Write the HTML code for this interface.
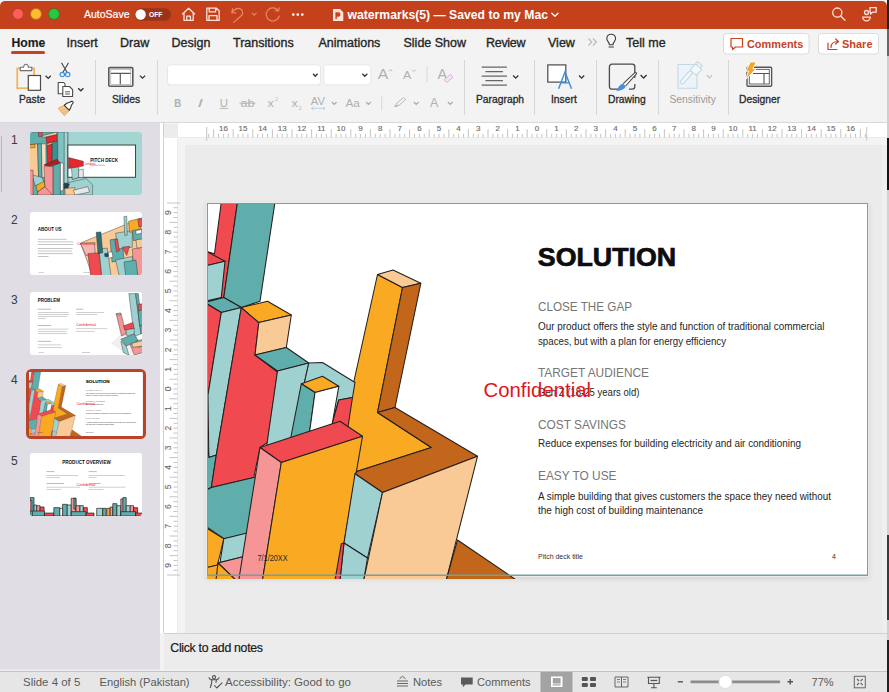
<!DOCTYPE html>
<html><head><meta charset="utf-8">
<style>
*{margin:0;padding:0;box-sizing:border-box}
html,body{width:889px;height:692px;overflow:hidden;background:#f2f2f2;font-family:"Liberation Sans",sans-serif}
.a{position:absolute}
#titlebar{left:0;top:1px;width:887px;height:28px;background:#c5411c;border-radius:5px 5px 0 0}
.tl{position:absolute;top:8.4px;width:12px;height:12px;border-radius:50%;border:0.8px solid rgba(120,20,10,0.45)}
.tab{position:absolute;top:35.5px;font-size:12.5px;color:#262626;white-space:nowrap;-webkit-text-stroke:0.35px #262626}
.lbl{position:absolute;top:94.2px;font-size:10.3px;color:#2a2a2a;white-space:nowrap;-webkit-text-stroke:0.3px #2a2a2a}
.sep{position:absolute;top:60px;width:1px;height:55px;background:#d6d6d6}
.num{position:absolute;left:11px;font-size:12px;color:#3a3a3a}
.thumb{position:absolute;left:29px;width:113px;height:63px;border-radius:3px;overflow:hidden;background:#fff}
.st{position:absolute;top:676px;font-size:11.5px;color:#555;white-space:nowrap}
</style></head><body>
<div class="a" style="left:0;top:0;width:889px;height:692px;background:#f3f3f3"></div>
<!-- right dark edge -->
<div class="a" style="left:887px;top:0;width:2px;height:692px;background:linear-gradient(#222 0,#222 29px,#666 29px,#666 56px,#cfcfcf 56px,#cfcfcf 138px,#141414 138px,#141414 190px,#d2d2d2 190px,#d2d2d2 535px,#3a3a3a 535px,#3a3a3a 620px,#cfcfcf 620px,#cfcfcf 640px,#222 640px)"></div>
<!-- title bar -->
<div id="titlebar" class="a"></div>
<div class="tl" style="left:12px;background:#fc5f57"></div>
<div class="tl" style="left:30px;background:#fdbc2e"></div>
<div class="tl" style="left:48px;background:#28c840"></div>
<div class="a" style="left:84px;top:8px;font-size:10.5px;color:#fff;-webkit-text-stroke:0.2px #fff">AutoSave</div>

<!-- ribbon background -->
<div class="a" style="left:0;top:29px;width:887px;height:94px;background:#f3f3f3;border-bottom:1px solid #d9d9d9"></div>

<!-- tabs -->
<div class="tab" style="left:11.5px;font-weight:bold;font-size:12.2px;-webkit-text-stroke:0.1px #1a1a1a;color:#1a1a1a">Home</div>
<div class="a" style="left:11px;top:51px;width:34px;height:3px;border-radius:2px;background:#c8421f"></div>
<div class="tab" style="left:66.5px">Insert</div>
<div class="tab" style="left:120px">Draw</div>
<div class="tab" style="left:171.5px">Design</div>
<div class="tab" style="left:233px">Transitions</div>
<div class="tab" style="left:318.5px">Animations</div>
<div class="tab" style="left:403.5px">Slide Show</div>
<div class="tab" style="left:486px;letter-spacing:-0.3px">Review</div>
<div class="tab" style="left:548px">View</div>
<div class="tab" style="left:626px">Tell me</div>

<!-- labels -->
<div class="lbl" style="left:19px">Paste</div>
<div class="lbl" style="left:112px">Slides</div>
<div class="lbl" style="left:476px">Paragraph</div>
<div class="lbl" style="left:551px">Insert</div>
<div class="lbl" style="left:608px">Drawing</div>
<div class="lbl" style="left:669.5px;color:#9a9a9a;-webkit-text-stroke:0">Sensitivity</div>
<div class="lbl" style="left:739px">Designer</div>

<!-- separators -->
<div class="sep" style="left:95px"></div>
<div class="sep" style="left:157px"></div>
<div class="sep" style="left:464px"></div>
<div class="sep" style="left:534px"></div>
<div class="sep" style="left:596px"></div>
<div class="sep" style="left:658px"></div>
<div class="sep" style="left:728px"></div>

<!-- ribbon icons -->
<svg class="a" style="left:0;top:0" width="889" height="123" viewBox="0 0 889 123">
<!-- title bar icons -->
<rect x="134.5" y="8.3" width="36.5" height="12.5" rx="6.25" fill="#8a3019" fill-opacity="0.75"/>
<circle cx="140.6" cy="14.55" r="5.2" fill="#fff"/>
<text x="149" y="17.3" font-family="Liberation Sans" font-weight="bold" font-size="7.2" fill="#fff" textLength="13.5" lengthAdjust="spacingAndGlyphs">OFF</text>
<g fill="none" stroke="#fde3d9" stroke-width="1.3" stroke-linejoin="round" stroke-linecap="round">
 <path d="M182.6 14 L188.6 8.2 L194.6 14 M184 12.8 V20.3 H193.2 V12.8 M186.8 20.3 V16.2 H190.4 V20.3"/>
 <path d="M206.8 8.2 H216.4 L219.2 11 V20.3 H206.8 Z M209.2 8.2 V11.8 H215.6 V8.2 M209 20.3 V15.6 H217 V20.3"/>
</g>
<g fill="none" stroke="#e8866b" stroke-width="1.2" stroke-linecap="round" stroke-linejoin="round">
 <path d="M231.8 12.6 L232.6 8.6 M231.8 12.6 L235.8 12.9 M232.2 12.2 C234.5 9.3 237.2 8 239.8 8.6 C243 9.5 243.2 13.2 241.8 15.3 L233.6 22.4"/>
 <path d="M252.2 13.2 L254.2 15.2 L256.2 13.2"/>
 <path d="M278.2 10.6 A6.6 6.6 0 1 0 279.2 16 M279.2 7.8 L278.6 11 L275.4 10.7"/>
</g>
<circle cx="293.3" cy="14.6" r="1.3" fill="#fff"/><circle cx="297.8" cy="14.6" r="1.3" fill="#fff"/><circle cx="302.3" cy="14.6" r="1.3" fill="#fff"/>
<!-- ppt doc icon -->
<path d="M333 9 H340 L343.3 12.3 V21 H333 Z" fill="#fde3d9"/>
<path d="M335.4 12.3 H338.3 A2.2 2.2 0 0 1 338.3 16.7 H336.8 V19 H335.4 Z" fill="#c8421f"/>
<text x="347.5" y="18.6" font-family="Liberation Sans" font-weight="bold" font-size="12.3" fill="#fff" textLength="200.5" lengthAdjust="spacingAndGlyphs">watermarks(5) — Saved to my Mac</text>
<path d="M551.8 13.2 L554.9 16.2 L558 13.2" fill="none" stroke="#fff" stroke-width="1.3" stroke-linecap="round" stroke-linejoin="round"/>
<g fill="none" stroke="#fde3d9" stroke-width="1.3" stroke-linecap="round">
 <circle cx="837.3" cy="12.6" r="4.6"/><path d="M840.6 16 L845 20.3"/>
 <circle cx="866.5" cy="12.5" r="2"/>
 <path d="M862.8 17.2 H870.2 A3.7 3.7 0 0 1 862.8 17.2 Z"/>
 <path d="M870 7.6 H876.2 V12.2 H872.6 L870.6 14 V12.2 H870 Z" stroke-linejoin="round"/>
</g>
<!-- Tabs extras: >> and lightbulb -->
<path d="M588.5 38.5 L591.8 42 L588.5 45.5 M593 38.5 L596.3 42 L593 45.5" fill="none" stroke="#b8b8b8" stroke-width="1.1"/>
<g fill="none" stroke="#3a3a3a" stroke-width="1.1" stroke-linecap="round">
 <path d="M609 47 H613.4 M609.4 44.8 C609.4 42 606.8 41.2 606.8 38.6 A4.4 4.4 0 0 1 615.6 38.6 C615.6 41.2 613 42 613 44.8 Z"/>
</g>
<!-- Comments / Share buttons -->
<rect x="723.5" y="33.5" width="85.5" height="20.5" rx="3" fill="#fff" stroke="#dcdcdc"/>
<rect x="818.5" y="33.5" width="60" height="20.5" rx="3" fill="#fff" stroke="#dcdcdc"/>
<g fill="none" stroke="#c8421f" stroke-width="1.2" stroke-linejoin="round" stroke-linecap="round">
 <path d="M731 38.5 H742.5 V47 H735.5 L732.6 49.6 V47 H731 Z"/>
 <path d="M828 43 V49.5 H837 M831 47.5 C831 43.5 834 41.5 838 41.5 M835.6 39 L838.5 41.5 L835.6 44"/>
</g>
<text x="747" y="47.8" font-family="Liberation Sans" font-weight="bold" font-size="11.8" fill="#c8421f" textLength="56.3" lengthAdjust="spacingAndGlyphs">Comments</text>
<text x="842" y="47.8" font-family="Liberation Sans" font-weight="bold" font-size="11.8" fill="#c8421f" textLength="30.5" lengthAdjust="spacingAndGlyphs">Share</text>

<!-- Paste -->
<rect x="17.2" y="68.4" width="17" height="19.8" fill="none" stroke="#f2b464" stroke-width="1.8"/>
<path d="M20.2 70.6 V67.2 H23.6 C23.8 64.8 25 64.2 26 64.2 C27 64.2 28.2 64.8 28.4 67.2 H31.8 V70.6 Z" fill="#fff" stroke="#6e6e6e" stroke-width="1.1" stroke-linejoin="round"/>
<rect x="28.3" y="75.5" width="12.2" height="14.8" fill="#fff" stroke="#4a4a4a" stroke-width="1.2"/>
<path d="M45.6 75.8 L48.2 78.4 L50.8 75.8" fill="none" stroke="#333" stroke-width="1.3"/>
<!-- scissors -->
<g fill="none" stroke-width="1.1">
 <path d="M61.5 62.8 L67 72.3 M68.5 62.8 L63 72.3" stroke="#444"/>
 <circle cx="62.3" cy="74.6" r="2.2" stroke="#3d8ad6"/><circle cx="67.7" cy="74.6" r="2.2" stroke="#3d8ad6"/>
</g>
<!-- copy -->
<g fill="#fff" stroke="#4a4a4a" stroke-width="1.1" stroke-linejoin="round">
 <path d="M58.2 82.5 H63.8 L65 84 V93.8 H58.2 Z"/>
 <path d="M62.8 86.5 H69.5 L72.6 89.6 V96.5 H62.8 Z"/>
 <path d="M65 91.8 H70 M65 94 H70" stroke-width="0.9"/>
</g>
<path d="M78.2 88.2 L80.8 90.8 L83.4 88.2" fill="none" stroke="#333" stroke-width="1.3"/>
<!-- format painter -->
<path d="M58.3 108.3 L64.3 105.3 L69.3 110.3 L64.4 115.6 Z" fill="#f8c890" stroke="#eda456" stroke-width="1" stroke-linejoin="round"/>
<path d="M61 110.6 L66.6 108.6 M62.5 113 L67.8 110.8" stroke="#f0a860" stroke-width="0.8"/>
<path d="M64.3 105.3 L67.2 103 L69.2 102.5 L71.6 101.2 A1.3 1.3 0 0 1 73 103 L71.4 105.2 L70.8 107.4 L69.3 110.3 Z" fill="#fff" stroke="#333" stroke-width="1.1" stroke-linejoin="round"/>
<!-- Slides -->
<rect x="108.8" y="67.6" width="24" height="18.6" rx="1" fill="#fff" stroke="#5a5a5a" stroke-width="1.6"/>
<path d="M110.8 73.4 H130.8 M120.3 73.4 V84.5" stroke="#5a5a5a" stroke-width="1.2"/>
<rect x="110.8" y="69.6" width="20" height="14.8" fill="none" stroke="#9a9a9a" stroke-width="0.6"/>
<path d="M139.9 75.6 L142.5 78.2 L145.1 75.6" fill="none" stroke="#333" stroke-width="1.3"/>
<!-- font boxes -->
<rect x="167.5" y="64.8" width="153" height="20" rx="3" fill="#fff" stroke="#e2e2e2" stroke-width="0.8"/>
<rect x="323.8" y="64.8" width="47" height="20" rx="3" fill="#fff" stroke="#e2e2e2" stroke-width="0.8"/>
<path d="M313 73.8 L315.3 76.3 L317.6 73.8 M362.3 73.8 L364.8 76.3 L367.3 73.8" fill="none" stroke="#333" stroke-width="1.3"/>
<g font-family="Liberation Sans" fill="#b0b0b0">
 <text x="377.8" y="79.4" font-size="14.5" textLength="10.5" lengthAdjust="spacingAndGlyphs">A</text>
 <text x="403" y="79.4" font-size="11.5" textLength="8.2" lengthAdjust="spacingAndGlyphs">A</text>
 <text x="437.6" y="79.4" font-size="14.5" textLength="9.5" lengthAdjust="spacingAndGlyphs">A</text>
 <text x="174.3" y="107" font-size="11.5" font-weight="bold" textLength="7" lengthAdjust="spacingAndGlyphs">B</text>
 <text x="197.5" y="107" font-size="11.5" font-style="italic" textLength="5.5" lengthAdjust="spacingAndGlyphs">I</text>
 <text x="219.8" y="107" font-size="11.5" textLength="8.2" lengthAdjust="spacingAndGlyphs">U</text>
 <text x="240.5" y="107" font-size="11" textLength="14" lengthAdjust="spacingAndGlyphs">ab</text>
 <text x="267.5" y="107" font-size="11.5" textLength="6.3" lengthAdjust="spacingAndGlyphs">x</text>
 <text x="291.5" y="107" font-size="11.5" textLength="6.3" lengthAdjust="spacingAndGlyphs">x</text>
 <text x="310.8" y="105" font-size="11" textLength="14.2" lengthAdjust="spacingAndGlyphs">AV</text>
 <text x="345.5" y="107" font-size="11.5" textLength="14.3" lengthAdjust="spacingAndGlyphs">Aa</text>
 <text x="430" y="107" font-size="12.5" textLength="8.3" lengthAdjust="spacingAndGlyphs">A</text>
</g>
<g fill="none" stroke="#b0b0b0" stroke-width="0.9">
 <path d="M389 71.3 L390.6 69.6 L392.2 71.3 M412.3 69.8 L414 71.5 L415.7 69.8"/>
 <path d="M427 66.4 V82.1 M381.7 96 V110.9" stroke="#d6d6d6"/>
 <path d="M219.8 108.4 H228.2 M239.5 103.2 H255.5"/>
 <path d="M331.8 102 L334.2 104.4 L336.6 102 M366 102 L368.4 104.4 L370.8 102 M413.8 102 L416.2 104.4 L418.6 102 M447.8 102 L450.2 104.4 L452.6 102" stroke="#a8a8a8" stroke-width="1.1"/>
 <path d="M395 106 L397 103 L403.5 97.5 L405.6 99.6 L399.2 105.2 Z M394.3 106.5 H397.5"/>
</g>
<text x="274.8" y="101" font-family="Liberation Sans" font-size="6" fill="#a9c7e3">2</text>
<text x="298.5" y="109.5" font-family="Liberation Sans" font-size="6" fill="#a9c7e3">2</text>
<path d="M311.5 108.3 H325 M311.5 108.3 L313.3 106.8 M311.5 108.3 L313.3 109.8 M325 108.3 L323.2 106.8 M325 108.3 L323.2 109.8" fill="none" stroke="#a9c7e3" stroke-width="0.8"/>
<path d="M444.2 79.6 L450.6 74.4 L453 77.3 L446.6 82.5 Z" fill="#f6e4f6" stroke="#d9a8dc" stroke-width="0.9"/>
<!-- Paragraph -->
<g stroke="#666" stroke-width="1.3">
 <path d="M481.7 67.1 H506.9 M485.4 71.6 H502.9 M481.7 76.2 H506.9 M485.4 80.7 H502.9 M481.7 85.1 H506.9"/>
</g>
<path d="M513.1 75.5 L515.7 78.1 L518.3 75.5" fill="none" stroke="#333" stroke-width="1.3"/>
<!-- Insert -->
<rect x="547.8" y="64.9" width="18" height="17.2" fill="#fff" stroke="#4a4a4a" stroke-width="1.2"/>
<path d="M558.6 88.7 L565 71.9 L571.5 88.7 M561 82.9 H569" fill="none" stroke="#3a8ed8" stroke-width="1.4"/>
<path d="M579 75.5 L581.6 78.1 L584.2 75.5" fill="none" stroke="#333" stroke-width="1.3"/>
<!-- Drawing -->
<path d="M622 89.2 H612 A2.6 2.6 0 0 1 609.4 86.6 V66.8 A2.6 2.6 0 0 1 612 64.2 H632.2 A2.6 2.6 0 0 1 634.8 66.8 V78 M634.8 84 V86.6 A2.6 2.6 0 0 1 632.2 89.2 H629" fill="none" stroke="#4a4a4a" stroke-width="1.3"/>
<path d="M623.2 83.6 L634.6 72.8 A1 1 0 0 1 636.2 74.2 L625.6 86" fill="#fff" stroke="#4a4a4a" stroke-width="1.1" stroke-linejoin="round"/>
<path d="M623 83.5 L625.8 86.2 C624.8 89.5 620 91 615.8 90.6 C618.5 89 618.2 85 623 83.5 Z" fill="#4a90d6"/>
<path d="M640.6 75 L643.6 78 L646.6 75" fill="none" stroke="#333" stroke-width="1.3"/>
<!-- Sensitivity -->
<g fill="none" stroke="#c3d8e6" stroke-width="1.1" stroke-linejoin="round">
 <rect x="678" y="64.5" width="19" height="23.8" fill="#edf3f8"/>
 <path d="M680.6 80.8 L688.8 71.6 A2 2 0 0 1 691.8 74.2 L683.6 83.4 A2 2 0 0 1 680.6 80.8 Z" fill="#f3f7fa"/>
 <path d="M690 69.8 L695.5 63.8 L701.8 69.4 L696.4 75.4 Z" fill="#f3f7fa"/>
 <path d="M695.2 64.2 L697.6 61.6 L702.4 66 L700 68.6"/>
</g>
<path d="M706.9 75.2 L709.5 77.8 L712.1 75.2" fill="none" stroke="#c0c0c0" stroke-width="1.2"/>
<!-- Designer -->
<rect x="747" y="67.2" width="24.6" height="19" rx="1" fill="#fff" stroke="#555" stroke-width="1.4"/>
<rect x="749.3" y="69.4" width="20" height="14.6" fill="none" stroke="#666" stroke-width="1"/>
<path d="M753 73.5 H769.3 M764 73.5 V84" stroke="#555" stroke-width="1.1"/>
<path d="M750.2 62 H756.4 L752.8 68.8 H756 L745.4 79.8 L748.6 71.2 H746 Z" fill="#f5a623" stroke="#fff" stroke-width="0.9" stroke-linejoin="round"/>
</svg>

<!-- slide panel -->
<div class="a" style="left:0;top:123px;width:160px;height:548px;background:#e0dee4"></div>

<!-- thumbnails -->
<div class="num" style="top:133px">1</div>
<div class="num" style="top:213px">2</div>
<div class="num" style="top:293px">3</div>
<div class="num" style="top:373px">4</div>
<div class="num" style="top:454px">5</div>
<div class="a" style="left:1px;top:136px;width:1px;height:56px;background:#b9b7bd"></div>
<!-- thumb 1 -->
<svg class="a" style="left:29.5px;top:132px;border-radius:3px" width="112" height="63" viewBox="22 18 836 469" preserveAspectRatio="none">
<rect x="0" y="0" width="900" height="520" fill="#a3d5d3"/>
<g stroke="#262626" stroke-width="3" stroke-linejoin="round">
<polygon fill="#5faeac" points="18,18 304,18 304,487 18,487"/>
<polygon fill="#f04a50" points="86,18 113,18 113,52 86,52"/>
<polygon fill="#f9c996" points="113,45 222,18 222,38 120,59"/>
<polygon fill="#e8262f" points="141,59 222,38 222,86 147,106"/>
<polygon fill="#f9c996" points="147,106 222,86 229,106 154,120"/>
<polygon fill="#e8262f" points="147,120 188,106 188,242 154,255"/>
<polygon fill="#3f8f8f" points="188,99 236,86 236,221 188,242"/>
<polygon fill="#7fc3c0" points="229,18 283,18 283,411 229,411"/>
<polygon fill="#a3d5d3" points="277,18 304,18 304,487 277,487"/>
<polygon fill="#f9c996" points="18,113 79,106 86,357 18,371"/>
<polygon fill="#5faeac" points="79,106 107,106 113,357 86,357"/>
<polygon fill="#f7dcc0" points="107,106 141,106 141,357 113,357"/>
<polygon fill="#f9aa22" points="18,113 59,110 59,133 18,137"/>
<polygon fill="#b71c1c" points="127,262 222,221 249,249 154,276"/>
<polygon fill="#f59595" points="127,269 195,276 195,487 134,487"/>
<polygon fill="#5faeac" points="195,269 249,249 249,487 195,487"/>
<polygon fill="#ffffff" points="249,249 270,249 270,452 249,459"/>
<polygon fill="#9fd1d0" points="39,337 113,357 127,398 59,418"/>
<polygon fill="#f9aa22" points="66,418 127,384 134,425 79,465"/>
<polygon fill="#f59595" points="18,303 45,303 45,487 18,487"/>
<polygon fill="#f59595" points="79,465 134,425 188,487 79,487"/>
<polygon fill="#9fd1d0" points="290,398 440,364 489,411 489,487 324,487"/>
<polygon fill="#1f3f55" points="277,398 317,404 304,438 277,438"/>
<polygon fill="#f9c996" points="283,438 358,432 358,487 283,487"/>
<polygon fill="#e8e8e8" points="345,452 453,425 467,465 358,487"/>
<polygon fill="#9fd1d0" points="331,282 385,276 385,357 338,371"/>
</g>
<rect x="305" y="115" width="505" height="240" fill="#fff" stroke="#2d3a3a" stroke-width="7"/>
<g stroke="#262626" stroke-width="3"><polygon fill="#9fd1d0" points="331,282 385,275 385,357 338,371"/><polygon fill="#e8e8e8" points="385,300 420,295 420,357 385,357"/><polygon fill="#e8262f" points="310,208 420,236 420,272 310,290"/></g>
<text x="472" y="240" font-family="Liberation Sans" font-weight="bold" font-size="34" fill="#111" textLength="208" lengthAdjust="spacingAndGlyphs">PITCH DECK</text>
<rect x="470" y="262" width="110" height="6" fill="#aaa"/>
<text x="430" y="262" font-family="Liberation Sans" font-size="26" fill="#e3141c" textLength="80" lengthAdjust="spacingAndGlyphs">Confidential</text>
</svg>
<!-- thumb 2 -->
<svg class="a" style="left:29.5px;top:212px;border-radius:3px" width="112" height="63" viewBox="22 18 836 469" preserveAspectRatio="none">
<rect x="0" y="0" width="900" height="520" fill="#fff"/>
<text x="80" y="160" font-family="Liberation Sans" font-weight="bold" font-size="34" fill="#111" textLength="178" lengthAdjust="spacingAndGlyphs">ABOUT US</text>
<g fill="#a8a8a8">
<rect x="80" y="218" width="215" height="5"/><rect x="80" y="238" width="265" height="5"/><rect x="80" y="258" width="265" height="5"/>
<rect x="80" y="286" width="260" height="5"/><rect x="80" y="306" width="255" height="5"/><rect x="80" y="326" width="260" height="5"/><rect x="80" y="348" width="80" height="5"/>
<rect x="85" y="468" width="40" height="4"/><rect x="420" y="468" width="60" height="4"/>
</g>
<g stroke="#262626" stroke-width="3" stroke-linejoin="round">
<polygon fill="#f9c996" points="399,249 862,59 869,495 489,495"/>
<polygon fill="#f5b5b0" points="399,252 503,245 509,335 440,342"/>
<polygon fill="#f04a50" points="454,328 537,321 558,495 475,495"/>
<polygon fill="#9fd1d0" points="537,293 599,287 627,495 558,495"/>
<polygon fill="#2f6f73" points="516,169 551,166 565,321 530,328"/>
<polygon fill="#5faeac" points="620,225 710,211 723,376 634,390"/>
<polygon fill="#9fd1d0" points="661,176 786,156 786,280 675,293"/>
<polygon fill="#f9aa22" points="758,87 841,66 848,156 765,169"/>
<polygon fill="#5faeac" points="786,156 869,142 869,225 793,231"/>
<polygon fill="#f04a50" points="710,280 765,273 744,342"/>
<polygon fill="#f04a50" points="654,225 675,218 689,307 668,314"/>
<polygon fill="#9fd1d0" points="661,376 786,349 813,495 689,495"/>
<polygon fill="#f59595" points="786,293 869,280 869,495 799,495"/>
<polygon fill="#5faeac" points="723,390 813,376 827,495 737,495"/>
<polygon fill="#9fd1d0" points="723,52 744,49 748,190 730,194"/>
<polygon fill="#ffffff" points="599,321 634,314 641,355 606,362"/>
<polygon fill="#1f4f55" points="578,328 606,324 610,349 582,352"/>
<polygon fill="#f9c996" points="813,225 869,218 869,280 820,287"/>
<polygon fill="#f04a50" points="827,73 869,66 869,121 834,128"/>
<polygon fill="#ffffff" points="813,156 855,149 855,176 813,183"/>
</g>
<text x="372" y="262" font-family="Liberation Sans" font-size="26" fill="#e3141c" textLength="140" lengthAdjust="spacingAndGlyphs">Confidential</text>
</svg>
<!-- thumb 3 -->
<svg class="a" style="left:29.5px;top:292px;border-radius:3px" width="112" height="63" viewBox="22 18 836 469" preserveAspectRatio="none">
<rect x="0" y="0" width="900" height="520" fill="#fff"/>
<text x="80" y="95" font-family="Liberation Sans" font-weight="bold" font-size="34" fill="#111" textLength="165" lengthAdjust="spacingAndGlyphs">PROBLEM</text>
<g fill="#a8a8a8">
<rect x="80" y="143" width="100" height="5" fill="#9a9a9a"/>
<rect x="80" y="170" width="230" height="4"/><rect x="80" y="185" width="235" height="4"/><rect x="80" y="200" width="220" height="4"/><rect x="80" y="215" width="60" height="4"/>
<rect x="80" y="266" width="100" height="5" fill="#9a9a9a"/>
<rect x="80" y="292" width="230" height="4"/><rect x="80" y="308" width="215" height="4"/><rect x="80" y="325" width="220" height="4"/>
<rect x="80" y="382" width="100" height="5" fill="#9a9a9a"/>
<rect x="80" y="410" width="175" height="4"/><rect x="80" y="428" width="180" height="4"/>
<rect x="365" y="143" width="55" height="5" fill="#9a9a9a"/>
<rect x="365" y="170" width="210" height="4"/><rect x="365" y="185" width="160" height="4"/>
<rect x="365" y="290" width="235" height="4"/><rect x="365" y="308" width="140" height="4"/>
<rect x="85" y="468" width="40" height="4"/><rect x="410" y="468" width="60" height="4"/>
</g>
<text x="368" y="268" font-family="Liberation Sans" font-size="30" fill="#e3141c" textLength="145" lengthAdjust="spacingAndGlyphs">Confidential</text>
<g stroke="#262626" stroke-width="3" stroke-linejoin="round">
<polygon fill="#f0f0f0" stroke="#ddd" points="630,400 720,320 865,420 760,487"/>
<polygon fill="#9fd1d0" points="760,30 810,30 850,330 800,350"/>
<polygon fill="#5faeac" points="810,30 830,30 865,320 850,330"/>
<polygon fill="#f04a50" points="830,110 865,105 865,160 835,165"/>
<polygon fill="#5faeac" points="830,160 865,150 865,260 840,270"/>
<polygon fill="#f59595" points="665,180 700,175 740,330 705,345"/>
<polygon fill="#f9c996" points="665,180 690,175 700,185 675,190"/>
<polygon fill="#f04a50" points="720,270 790,245 800,290 730,300"/>
<polygon fill="#5faeac" points="700,370 800,330 830,380 740,420"/>
<polygon fill="#9fd1d0" points="700,385 740,420 760,487 720,470"/>
<polygon fill="#f59595" points="770,410 865,380 865,470 800,487"/>
<polygon fill="#9fd1d0" points="820,380 865,370 865,420 830,430"/>
<polygon fill="#f9c996" points="780,400 860,380 865,420 790,430"/>
<polygon fill="#9fd1d0" points="740,300 800,290 800,330 745,345"/>
</g>
</svg>
<!-- thumb 4 -->
<div class="a" style="left:26px;top:369px;width:119.5px;height:70px;border:3px solid #b9442a;border-radius:5.5px"></div>
<svg class="a" style="left:29px;top:372px" width="113.5" height="64" viewBox="207 203 661 373" preserveAspectRatio="none">
<rect x="207" y="203" width="661" height="373" fill="#fff"/>
<use href="#slideart"/>
<use href="#slidetext"/>
</svg>
<!-- thumb 5 -->
<svg class="a" style="left:29.5px;top:452.5px;border-radius:3px" width="112" height="63" viewBox="22 18 836 469" preserveAspectRatio="none">
<rect x="0" y="0" width="900" height="520" fill="#fff"/>
<text x="262" y="97" font-family="Liberation Sans" font-weight="bold" font-size="34" fill="#111" textLength="363" lengthAdjust="spacingAndGlyphs">PRODUCT OVERVIEW</text>
<g fill="#a8a8a8">
<rect x="145" y="155" width="60" height="5" fill="#9a9a9a"/><rect x="145" y="183" width="235" height="4"/><rect x="145" y="200" width="100" height="4"/>
<rect x="460" y="155" width="60" height="5" fill="#9a9a9a"/><rect x="460" y="183" width="270" height="4"/><rect x="460" y="200" width="60" height="4"/>
<rect x="145" y="243" width="130" height="5" fill="#9a9a9a"/><rect x="145" y="270" width="250" height="4"/><rect x="145" y="288" width="110" height="4"/>
<rect x="460" y="243" width="90" height="5" fill="#9a9a9a"/><rect x="460" y="270" width="275" height="4"/><rect x="460" y="288" width="110" height="4"/>
</g>
<text x="370" y="262" font-family="Liberation Sans" font-size="26" fill="#e3141c" textLength="140" lengthAdjust="spacingAndGlyphs">Confidential</text>
<g stroke="#1a1a1a" stroke-width="5" stroke-linejoin="round">
<rect x="22" y="350" width="30" height="137" fill="#5faeac"/>
<rect x="22" y="370" width="14" height="80" fill="#f59595"/>
<rect x="52" y="405" width="20" height="82" fill="#9fd1d0"/>
<rect x="72" y="410" width="25" height="77" fill="#f59595"/>
<rect x="97" y="420" width="30" height="67" fill="#f04a50"/>
<rect x="40" y="450" width="90" height="37" fill="#5faeac"/>
<rect x="130" y="465" width="70" height="22" fill="#f04a50"/>
<rect x="200" y="425" width="45" height="62" fill="#5faeac"/>
<rect x="265" y="400" width="35" height="87" fill="#5faeac"/>
<rect x="245" y="430" width="20" height="57" fill="#fff"/>
<rect x="300" y="405" width="30" height="82" fill="#9fd1d0"/>
<rect x="330" y="355" width="35" height="132" fill="#f59595"/>
<rect x="350" y="355" width="15" height="80" fill="#5faeac"/>
<rect x="365" y="410" width="30" height="77" fill="#f59595"/>
<rect x="395" y="410" width="25" height="77" fill="#9fd1d0"/>
<rect x="420" y="425" width="30" height="62" fill="#f04a50"/>
<rect x="330" y="455" width="110" height="32" fill="#5faeac"/>
<rect x="440" y="465" width="60" height="22" fill="#f04a50"/>
<rect x="520" y="430" width="45" height="57" fill="#9fd1d0"/>
<rect x="565" y="430" width="25" height="57" fill="#5faeac"/>
<rect x="595" y="430" width="25" height="57" fill="#f9aa22"/>
<rect x="620" y="420" width="20" height="67" fill="#f59595"/>
<rect x="640" y="395" width="30" height="92" fill="#5faeac"/>
<rect x="670" y="410" width="30" height="77" fill="#9fd1d0"/>
<rect x="700" y="360" width="20" height="127" fill="#f59595"/>
<rect x="715" y="350" width="25" height="137" fill="#5faeac"/>
<rect x="740" y="410" width="30" height="77" fill="#9fd1d0"/>
<rect x="770" y="410" width="25" height="77" fill="#f59595"/>
<rect x="795" y="425" width="30" height="62" fill="#f04a50"/>
<rect x="700" y="455" width="110" height="32" fill="#5faeac"/>
<rect x="810" y="465" width="55" height="22" fill="#f04a50"/>
</g>
</svg>

<!-- editor -->
<div class="a" style="left:160px;top:123px;width:727px;height:510px;background:#ffffff"></div>
<div class="a" style="left:163px;top:123px;width:1px;height:510px;background:#d0d0d0"></div>
<div class="a" style="left:177px;top:137px;width:710px;height:496px;background:#f4f4f4"></div>
<div class="a" style="left:185px;top:145px;width:702px;height:488px;background:#ebebeb"></div>
<div class="a" style="left:881.5px;top:145px;width:5.5px;height:488px;background:#efefef"></div>

<!-- rulers -->
<svg class="a" style="left:160px;top:123px" width="727" height="510" viewBox="160 123 727 510">
<rect x="177.5" y="123.5" width="710" height="14" fill="#fff"/>
<rect x="163.5" y="123.5" width="14" height="14" fill="#ececec"/>
<rect x="163.5" y="137.5" width="14" height="496" fill="#fff"/>
<line x1="163.5" y1="123" x2="163.5" y2="633" stroke="#cfcfcf" stroke-width="1"/>
<line x1="177.5" y1="123" x2="177.5" y2="633" stroke="#ececec" stroke-width="1"/>
<line x1="163" y1="137.5" x2="887" y2="137.5" stroke="#ececec" stroke-width="1"/>
<path d="M208.7 133.8 V137.4 M213.6 129.2 V137.4 M218.5 133.8 V137.4 M223.4 133.8 V137.4 M228.3 133.8 V137.4 M233.2 129.2 V137.4 M238.1 133.8 V137.4 M243.0 133.8 V137.4 M247.9 133.8 V137.4 M252.8 129.2 V137.4 M257.7 133.8 V137.4 M262.6 133.8 V137.4 M267.5 133.8 V137.4 M272.4 129.2 V137.4 M277.3 133.8 V137.4 M282.2 133.8 V137.4 M287.1 133.8 V137.4 M292.0 129.2 V137.4 M296.9 133.8 V137.4 M301.8 133.8 V137.4 M306.7 133.8 V137.4 M311.6 129.2 V137.4 M316.5 133.8 V137.4 M321.4 133.8 V137.4 M326.3 133.8 V137.4 M331.2 129.2 V137.4 M336.1 133.8 V137.4 M341.0 133.8 V137.4 M345.9 133.8 V137.4 M350.8 129.2 V137.4 M355.7 133.8 V137.4 M360.6 133.8 V137.4 M365.5 133.8 V137.4 M370.4 129.2 V137.4 M375.3 133.8 V137.4 M380.2 133.8 V137.4 M385.1 133.8 V137.4 M390.0 129.2 V137.4 M394.9 133.8 V137.4 M399.8 133.8 V137.4 M404.7 133.8 V137.4 M409.6 129.2 V137.4 M414.5 133.8 V137.4 M419.4 133.8 V137.4 M424.3 133.8 V137.4 M429.2 129.2 V137.4 M434.1 133.8 V137.4 M439.0 133.8 V137.4 M443.9 133.8 V137.4 M448.8 129.2 V137.4 M453.7 133.8 V137.4 M458.6 133.8 V137.4 M463.5 133.8 V137.4 M468.4 129.2 V137.4 M473.3 133.8 V137.4 M478.2 133.8 V137.4 M483.1 133.8 V137.4 M488.0 129.2 V137.4 M492.9 133.8 V137.4 M497.8 133.8 V137.4 M502.7 133.8 V137.4 M507.6 129.2 V137.4 M512.5 133.8 V137.4 M517.4 133.8 V137.4 M522.3 133.8 V137.4 M527.2 129.2 V137.4 M532.1 133.8 V137.4 M537.0 133.8 V137.4 M541.9 133.8 V137.4 M546.8 129.2 V137.4 M551.7 133.8 V137.4 M556.6 133.8 V137.4 M561.5 133.8 V137.4 M566.4 129.2 V137.4 M571.3 133.8 V137.4 M576.2 133.8 V137.4 M581.1 133.8 V137.4 M586.0 129.2 V137.4 M590.9 133.8 V137.4 M595.8 133.8 V137.4 M600.7 133.8 V137.4 M605.6 129.2 V137.4 M610.5 133.8 V137.4 M615.4 133.8 V137.4 M620.3 133.8 V137.4 M625.2 129.2 V137.4 M630.1 133.8 V137.4 M635.0 133.8 V137.4 M639.9 133.8 V137.4 M644.8 129.2 V137.4 M649.7 133.8 V137.4 M654.6 133.8 V137.4 M659.5 133.8 V137.4 M664.4 129.2 V137.4 M669.3 133.8 V137.4 M674.2 133.8 V137.4 M679.1 133.8 V137.4 M684.0 129.2 V137.4 M688.9 133.8 V137.4 M693.8 133.8 V137.4 M698.7 133.8 V137.4 M703.6 129.2 V137.4 M708.5 133.8 V137.4 M713.4 133.8 V137.4 M718.3 133.8 V137.4 M723.2 129.2 V137.4 M728.1 133.8 V137.4 M733.0 133.8 V137.4 M737.9 133.8 V137.4 M742.8 129.2 V137.4 M747.7 133.8 V137.4 M752.6 133.8 V137.4 M757.5 133.8 V137.4 M762.4 129.2 V137.4 M767.3 133.8 V137.4 M772.2 133.8 V137.4 M777.1 133.8 V137.4 M782.0 129.2 V137.4 M786.9 133.8 V137.4 M791.8 133.8 V137.4 M796.7 133.8 V137.4 M801.6 129.2 V137.4 M806.5 133.8 V137.4 M811.4 133.8 V137.4 M816.3 133.8 V137.4 M821.2 129.2 V137.4 M826.1 133.8 V137.4 M831.0 133.8 V137.4 M835.9 133.8 V137.4 M840.8 129.2 V137.4 M845.7 133.8 V137.4 M850.6 133.8 V137.4 M855.5 133.8 V137.4 M860.4 129.2 V137.4 M865.3 133.8 V137.4 M206.7 127 V140.5 M866.7 127 V140.5" stroke="#bdbdbd" stroke-width="0.9" fill="none"/>
<g font-family="Liberation Sans" font-size="8" fill="#6f6f6f" stroke="#6f6f6f" stroke-width="0.15"><text x="223.4" y="130.8" text-anchor="middle">16</text><text x="243.0" y="130.8" text-anchor="middle">15</text><text x="262.6" y="130.8" text-anchor="middle">14</text><text x="282.2" y="130.8" text-anchor="middle">13</text><text x="301.8" y="130.8" text-anchor="middle">12</text><text x="321.4" y="130.8" text-anchor="middle">11</text><text x="341.0" y="130.8" text-anchor="middle">10</text><text x="360.6" y="130.8" text-anchor="middle">9</text><text x="380.2" y="130.8" text-anchor="middle">8</text><text x="399.8" y="130.8" text-anchor="middle">7</text><text x="419.4" y="130.8" text-anchor="middle">6</text><text x="439.0" y="130.8" text-anchor="middle">5</text><text x="458.6" y="130.8" text-anchor="middle">4</text><text x="478.2" y="130.8" text-anchor="middle">3</text><text x="497.8" y="130.8" text-anchor="middle">2</text><text x="517.4" y="130.8" text-anchor="middle">1</text><text x="537.0" y="130.8" text-anchor="middle">0</text><text x="556.6" y="130.8" text-anchor="middle">1</text><text x="576.2" y="130.8" text-anchor="middle">2</text><text x="595.8" y="130.8" text-anchor="middle">3</text><text x="615.4" y="130.8" text-anchor="middle">4</text><text x="635.0" y="130.8" text-anchor="middle">5</text><text x="654.6" y="130.8" text-anchor="middle">6</text><text x="674.2" y="130.8" text-anchor="middle">7</text><text x="693.8" y="130.8" text-anchor="middle">8</text><text x="713.4" y="130.8" text-anchor="middle">9</text><text x="733.0" y="130.8" text-anchor="middle">10</text><text x="752.6" y="130.8" text-anchor="middle">11</text><text x="772.2" y="130.8" text-anchor="middle">12</text><text x="791.8" y="130.8" text-anchor="middle">13</text><text x="811.4" y="130.8" text-anchor="middle">14</text><text x="831.0" y="130.8" text-anchor="middle">15</text><text x="850.6" y="130.8" text-anchor="middle">16</text></g>
<path d="M173.5 207.7 H177.6 M173.5 212.6 H177.6 M173.5 217.5 H177.6 M169.5 222.4 H177.6 M173.5 227.3 H177.6 M173.5 232.2 H177.6 M173.5 237.1 H177.6 M169.5 242.0 H177.6 M173.5 246.9 H177.6 M173.5 251.8 H177.6 M173.5 256.7 H177.6 M169.5 261.6 H177.6 M173.5 266.5 H177.6 M173.5 271.4 H177.6 M173.5 276.3 H177.6 M169.5 281.2 H177.6 M173.5 286.1 H177.6 M173.5 291.0 H177.6 M173.5 295.9 H177.6 M169.5 300.8 H177.6 M173.5 305.7 H177.6 M173.5 310.6 H177.6 M173.5 315.5 H177.6 M169.5 320.4 H177.6 M173.5 325.3 H177.6 M173.5 330.2 H177.6 M173.5 335.1 H177.6 M169.5 340.0 H177.6 M173.5 344.9 H177.6 M173.5 349.8 H177.6 M173.5 354.7 H177.6 M169.5 359.6 H177.6 M173.5 364.5 H177.6 M173.5 369.4 H177.6 M173.5 374.3 H177.6 M169.5 379.2 H177.6 M173.5 384.1 H177.6 M173.5 389.0 H177.6 M173.5 393.9 H177.6 M169.5 398.8 H177.6 M173.5 403.7 H177.6 M173.5 408.6 H177.6 M173.5 413.5 H177.6 M169.5 418.4 H177.6 M173.5 423.3 H177.6 M173.5 428.2 H177.6 M173.5 433.1 H177.6 M169.5 438.0 H177.6 M173.5 442.9 H177.6 M173.5 447.8 H177.6 M173.5 452.7 H177.6 M169.5 457.6 H177.6 M173.5 462.5 H177.6 M173.5 467.4 H177.6 M173.5 472.3 H177.6 M169.5 477.2 H177.6 M173.5 482.1 H177.6 M173.5 487.0 H177.6 M173.5 491.9 H177.6 M169.5 496.8 H177.6 M173.5 501.7 H177.6 M173.5 506.6 H177.6 M173.5 511.5 H177.6 M169.5 516.4 H177.6 M173.5 521.3 H177.6 M173.5 526.2 H177.6 M173.5 531.1 H177.6 M169.5 536.0 H177.6 M173.5 540.9 H177.6 M173.5 545.8 H177.6 M173.5 550.7 H177.6 M169.5 555.6 H177.6 M173.5 560.5 H177.6 M173.5 565.4 H177.6 M173.5 570.3 H177.6 M167 203.0 H180 M167 575.0 H180" stroke="#bdbdbd" stroke-width="0.9" fill="none"/>
<g font-family="Liberation Sans" font-size="8.5" fill="#6f6f6f" stroke="#6f6f6f" stroke-width="0.15"><text transform="translate(171.3 212.6) rotate(-90)" text-anchor="middle">9</text><text transform="translate(171.3 232.2) rotate(-90)" text-anchor="middle">8</text><text transform="translate(171.3 251.8) rotate(-90)" text-anchor="middle">7</text><text transform="translate(171.3 271.4) rotate(-90)" text-anchor="middle">6</text><text transform="translate(171.3 291.0) rotate(-90)" text-anchor="middle">5</text><text transform="translate(171.3 310.6) rotate(-90)" text-anchor="middle">4</text><text transform="translate(171.3 330.2) rotate(-90)" text-anchor="middle">3</text><text transform="translate(171.3 349.8) rotate(-90)" text-anchor="middle">2</text><text transform="translate(171.3 369.4) rotate(-90)" text-anchor="middle">1</text><text transform="translate(171.3 389.0) rotate(-90)" text-anchor="middle">0</text><text transform="translate(171.3 408.6) rotate(-90)" text-anchor="middle">1</text><text transform="translate(171.3 428.2) rotate(-90)" text-anchor="middle">2</text><text transform="translate(171.3 447.8) rotate(-90)" text-anchor="middle">3</text><text transform="translate(171.3 467.4) rotate(-90)" text-anchor="middle">4</text><text transform="translate(171.3 487.0) rotate(-90)" text-anchor="middle">5</text><text transform="translate(171.3 506.6) rotate(-90)" text-anchor="middle">6</text><text transform="translate(171.3 526.2) rotate(-90)" text-anchor="middle">7</text><text transform="translate(171.3 545.8) rotate(-90)" text-anchor="middle">8</text><text transform="translate(171.3 565.4) rotate(-90)" text-anchor="middle">9</text></g>
</svg>
<!-- notes -->
<div class="a" style="left:164px;top:633px;width:723px;height:38px;background:#ececec;border-top:1px solid #d2d2d2"></div>
<div class="a" style="left:170.3px;top:641.3px;font-size:12.3px;letter-spacing:-0.3px;color:#1a1a1a;-webkit-text-stroke:0.2px #1a1a1a">Click to add notes</div>

<!-- status bar -->
<svg class="a" style="left:0;top:668px" width="889" height="24" viewBox="0 668 889 24">
<rect x="0" y="670.5" width="887" height="22" fill="#e6e6e6"/>
<line x1="0" y1="671.5" x2="887" y2="671.5" stroke="#c4c4c4" stroke-width="1"/>
<line x1="0" y1="670" x2="887" y2="670" stroke="#f4f4f4" stroke-width="1"/>
<g font-family="Liberation Sans" font-size="11.3" fill="#5a5a5a">
<text x="23" y="685.8" textLength="57.3" lengthAdjust="spacingAndGlyphs">Slide 4 of 5</text>
<text x="99.6" y="685.8" textLength="90" lengthAdjust="spacingAndGlyphs">English (Pakistan)</text>
<text x="225" y="685.8" textLength="126" lengthAdjust="spacingAndGlyphs">Accessibility: Good to go</text>
<text x="412.9" y="685.8" textLength="29.2" lengthAdjust="spacingAndGlyphs">Notes</text>
<text x="477" y="685.8" textLength="53.6" lengthAdjust="spacingAndGlyphs">Comments</text>
<text x="811.5" y="685.8" textLength="22.2" lengthAdjust="spacingAndGlyphs">77%</text>
</g>
<!-- accessibility icon -->
<g fill="none" stroke="#555" stroke-width="1.1" stroke-linecap="round" stroke-linejoin="round">
<circle cx="214" cy="677.2" r="1.6"/>
<path d="M209 677.5 C209.5 680 212 680 214 679.5 C216 680 218.5 680 219 677.5 M211.8 680 C212 682.5 211.5 684.5 210.3 687.5 M216.3 680.5 L216 682.5"/>
<path d="M214.5 685.5 L216.8 688 L222 682.8"/>
</g>
<!-- notes icon -->
<g stroke="#666" stroke-width="1" fill="none">
<path d="M399.5 678.8 L402.5 676.3 L405.5 678.8"/>
<path d="M397 681 H408 M397 683.5 H408 M397 686 H408"/>
</g>
<!-- comments icon -->
<path d="M461 677.5 H472.7 V684.5 H465.5 L462.8 687.2 V684.5 H461 Z" fill="#5a5a5a"/>
<!-- normal view -->
<rect x="540.5" y="672" width="32" height="20" fill="#a3a3a3"/>
<rect x="551" y="676.5" width="11.5" height="10.5" fill="#fff"/>
<rect x="552.8" y="678" width="7.8" height="5.5" fill="#a3a3a3"/>
<rect x="552.8" y="684.3" width="7.8" height="1.2" fill="#a3a3a3"/>
<!-- grid -->
<g fill="#555">
<rect x="581.8" y="677" width="6" height="4" rx="1"/><rect x="590" y="677" width="6" height="4" rx="1"/>
<rect x="581.8" y="683" width="6" height="4" rx="1"/><rect x="590" y="683" width="6" height="4" rx="1"/>
</g>
<!-- book -->
<g fill="none" stroke="#666" stroke-width="1">
<path d="M615 677 H621.5 V687 H615 Z M621.5 677 H628 V687 H621.5"/>
<path d="M617 679.5 H620 M617 682 H620 M623 679.5 H626 M623 682 H626" stroke-width="0.8"/>
</g>
<!-- presenter -->
<g fill="none" stroke="#555" stroke-width="1.1">
<path d="M647.3 677.3 H660.5 M648.5 677.3 V683.5 H659.3 V677.3 M653.9 683.5 V687.5 M651 687.8 H656.8"/>
<path d="M650.5 680.5 H657.2" stroke-width="1.3"/>
</g>
<!-- zoom -->
<path d="M677.8 681.8 H683" stroke="#555" stroke-width="1.4"/>
<rect x="690.3" y="680.6" width="90" height="2.6" rx="1.3" fill="#8c8c8c"/>
<circle cx="725.4" cy="681.9" r="6.6" fill="#fff" stroke="#d0d0d0" stroke-width="0.6"/>
<path d="M787.5 681.8 H793 M790.25 679 V684.6" stroke="#555" stroke-width="1.4"/>
<!-- fit -->
<g fill="none" stroke="#666" stroke-width="1">
<rect x="854.3" y="676.3" width="11" height="11.5"/>
<path d="M857 679 L859 681 M862.6 679 L860.6 681 M857 685 L859 683 M862.6 685 L860.6 683" stroke-width="1.1"/>
</g>
</svg>

<!-- slide -->
<div class="a" style="left:206px;top:202px;width:663px;height:375px;box-shadow:0 2px 5px rgba(0,0,0,0.10)"></div>
<svg class="a" style="left:207px;top:203px" width="661" height="377" viewBox="207 203 661 377">
<defs><clipPath id="cl"><rect x="207" y="203" width="661" height="376"/></clipPath></defs>
<rect x="207" y="203" width="661" height="372.5" fill="#fff"/>
<g id="slideart" clip-path="url(#cl)" stroke="#241f1f" stroke-width="1.05" stroke-linejoin="round">
<!-- tall red stripe -->
<polygon fill="#f04a50" points="221.3,202 237.5,202 223.8,297.5 205,302 205,251 214.5,253.8"/>
<!-- tall teal stripe -->
<polygon fill="#5faeac" points="237.5,202 275,202 260,301.3 241.3,307.5 223.8,297.5"/>
<!-- red cap -->
<polygon fill="#f04a50" points="205,250.5 225,261.3 205,266"/>
<!-- light teal small front -->
<polygon fill="#9fd1d0" points="205,266 225,261.3 221.3,297.5 205,301.3"/>
<!-- teal top lower block -->
<polygon fill="#5faeac" points="205,302.5 223.8,297.5 241.3,307.5 221.3,312.5"/>
<!-- red left face -->
<polygon fill="#f04a50" points="205,303 221.3,312.5 208,395 205,395"/>
<!-- light teal strip -->
<polygon fill="#9fd1d0" points="221.3,312.5 241.3,307.5 216.3,455 208.8,457.5 208,395"/>
<!-- teal sliver -->
<polygon fill="#5faeac" points="205,395 208.8,457.5 216.3,455 211.3,487.5 205,490"/>
<!-- tall orange column + L -->
<polygon fill="#f9aa22" points="377.5,274.5 402.5,287.5 377.5,412.5 431.3,447.5 357.5,471.3 335,470 335,420 352,390"/>
<!-- red big face -->
<polygon fill="#f04a50" points="241.3,307.5 258.8,322.5 255,355 277.5,372 267.5,442.5 260,447.5 253.8,477.5 211.3,487.5 216.3,455"/>
<!-- orange cube top -->
<polygon fill="#f9aa22" points="241.3,307.5 267.5,301.3 291.3,315 258.8,322.5"/>
<!-- peach cube front -->
<polygon fill="#f9c996" points="258.8,322.5 291.3,315 286.3,347.5 255,355"/>
<!-- teal step top -->
<polygon fill="#5faeac" points="255,355 286.3,347.5 308.8,363 277.5,371"/>
<!-- light teal front face -->
<polygon fill="#9fd1d0" points="277.5,371 308.8,363 291.5,440 266.5,447"/>
<!-- light teal behind small -->
<polygon fill="#9fd1d0" points="308.8,363 322.5,362.5 355,382.5 352.5,397.5 338.8,400 332.5,421.3 310,430 291.5,440"/>
<!-- red behind small -->
<polygon fill="#f04a50" points="338.8,400 352.5,397.5 347.5,430 331.5,426"/>
<!-- small block -->
<polygon fill="#f9aa22" points="301.3,383.8 322.5,376.3 338.8,386.3 315,392.5"/>
<polygon fill="#5faeac" points="301.3,383.8 315,392.5 309.3,434 290.5,439"/>
<polygon fill="#ffffff" points="315,392.5 338.8,386.3 331.8,426 309.3,434"/>
<!-- teal dark bottom-left -->
<polygon fill="#5faeac" points="205,491 211.3,487.5 253.8,477.5 258,477 250,533 223.8,538.8 207.5,527.5 205,527"/>
<polygon fill="#f9aa22" points="205,527 223.8,538.8 217.5,565 205,568"/>
<polygon fill="#9fd1d0" points="223.8,538.8 250,532.3 250,555 220,562.5"/>
<polygon fill="#f59595" points="218,563 250,555 250,580 235.7,580"/>
<polygon fill="#f9aa22" points="205,568 217.5,565 218,563 235.7,580 205,580"/>
<polyline fill="none" points="218,563 216,580"/>
<!-- big block -->
<polygon fill="#f04a50" points="260,447.5 340,421.3 362.5,436.3 281.3,462.5"/>
<polygon fill="#f59595" points="260,447.5 281.3,462.5 262.5,580 238.8,580"/>
<polygon fill="#f9aa22" points="281.3,462.5 362.5,436.3 337.5,580 262.5,580"/>
<!-- tall column top & right -->
<polygon fill="#f9c996" points="377.5,274.5 393,270 420.8,283.3 402.5,287.5"/>
<polygon fill="#c2661b" points="402.5,287.5 420.8,283.3 395,407.5 377.5,412.5"/>
<!-- dark band -->
<polygon fill="#c2661b" points="377.5,412.5 395,407.5 477.5,456.3 382.5,492.5 355,473.8 357.5,471.3 431.3,447.5"/>
<!-- light teal right -->
<polygon fill="#9fd1d0" points="355,473.8 382.5,492.5 367.5,558 344,543"/>
<polygon fill="#9fd1d0" points="344,543 367.5,558 363.8,580 340,580"/>
<polygon fill="#f04a50" points="341.3,543.8 344,543 340,580 335,580"/>
<!-- peach front -->
<polygon fill="#f9c996" points="382.5,492.5 477.5,456.3 446.3,580 363.8,580"/>
<!-- dark triangle -->
<polygon fill="#c2661b" points="457.5,540 446.3,580 516.3,580"/>
</g>
<line x1="207" y1="575" x2="868" y2="575" stroke="#6f9c9c" stroke-width="1"/>
<rect x="207.5" y="203.5" width="660" height="372" fill="none" stroke="#74a0a0" stroke-width="1"/>
<!-- text -->
<g id="slidetext" font-family="Liberation Sans">
<text x="537.8" y="265.9" font-size="25.2" font-weight="bold" fill="#0d0d0d" stroke="#0d0d0d" stroke-width="0.7" textLength="138.3" lengthAdjust="spacingAndGlyphs">SOLUTION</text>
<text x="538" y="311.3" font-size="13" fill="#767676" textLength="94" lengthAdjust="spacingAndGlyphs">CLOSE THE GAP</text>
<text x="538" y="330.3" font-size="10" fill="#262626" textLength="286.5" lengthAdjust="spacingAndGlyphs">Our product offers the style and function of traditional commercial</text>
<text x="538" y="344.5" font-size="10" fill="#262626" textLength="188" lengthAdjust="spacingAndGlyphs">spaces, but with a plan for energy efficiency</text>
<text x="538" y="376.7" font-size="13" fill="#767676" textLength="111" lengthAdjust="spacingAndGlyphs">TARGET AUDIENCE</text>
<text x="538" y="395.9" font-size="10" fill="#262626" textLength="101.5" lengthAdjust="spacingAndGlyphs">Gen Z (18-25 years old)</text>
<text x="538" y="428.5" font-size="13" fill="#767676" textLength="88" lengthAdjust="spacingAndGlyphs">COST SAVINGS</text>
<text x="538" y="447.3" font-size="10" fill="#262626" textLength="263" lengthAdjust="spacingAndGlyphs">Reduce expenses for building electricity and air conditioning</text>
<text x="538" y="479.7" font-size="13" fill="#767676" textLength="78.5" lengthAdjust="spacingAndGlyphs">EASY TO USE</text>
<text x="538" y="499.5" font-size="10" fill="#262626" textLength="293" lengthAdjust="spacingAndGlyphs">A simple building that gives customers the space they need without</text>
<text x="538" y="513.5" font-size="10" fill="#262626" textLength="165" lengthAdjust="spacingAndGlyphs">the high cost of building maintenance</text>
<text x="538" y="559" font-size="7" fill="#333" textLength="45" lengthAdjust="spacingAndGlyphs">Pitch deck title</text>
<text x="832" y="559" font-size="7" fill="#333">4</text>
<text x="257.5" y="560.6" font-size="8.6" fill="#262626" textLength="30" lengthAdjust="spacingAndGlyphs">7/1/20XX</text>
<text x="483.5" y="396.6" font-size="20.4" fill="#e3141c" textLength="107.6" lengthAdjust="spacingAndGlyphs">Confidential</text>
</g>
</svg>
</body></html>
